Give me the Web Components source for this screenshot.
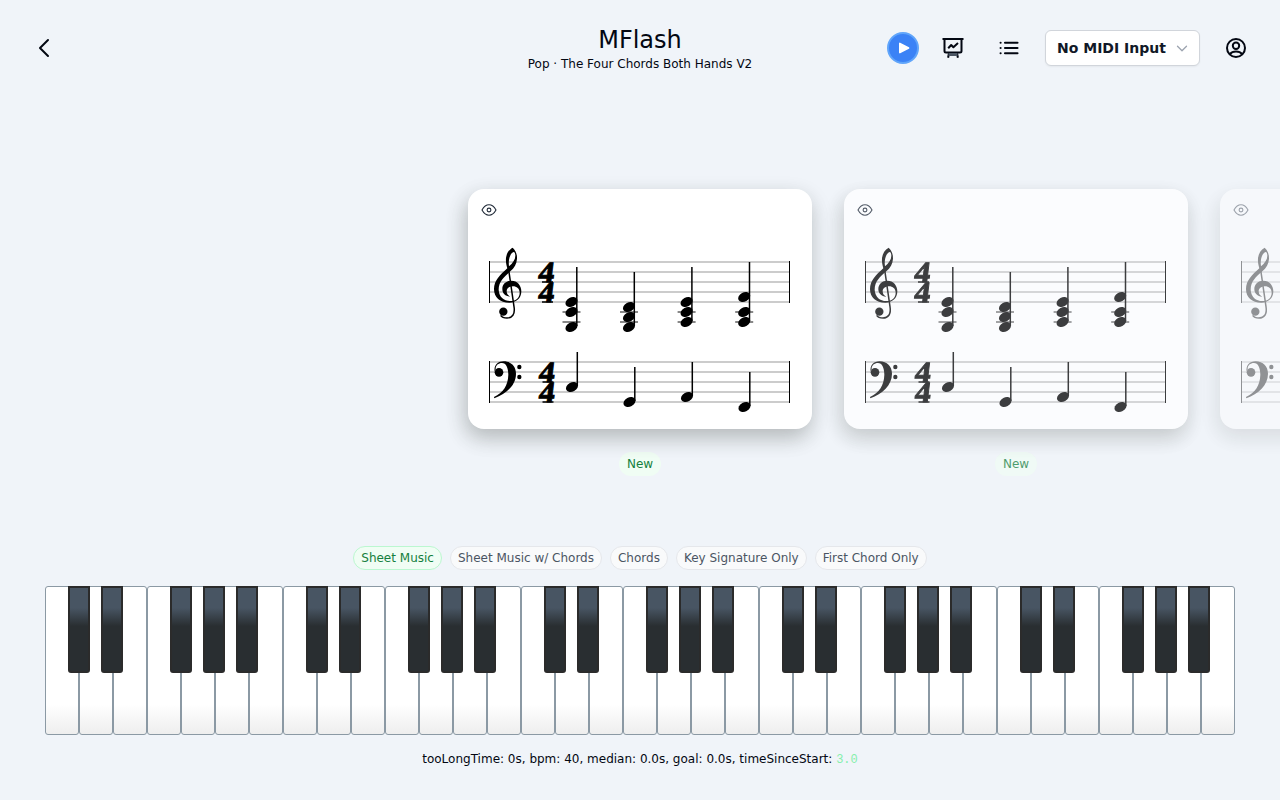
<!DOCTYPE html>
<html lang="en"><head><meta charset="utf-8"><title>MFlash</title>
<style>html,body{margin:0;height:100%}body{background:#f0f4f9;font-family:"DejaVu Sans",sans-serif;color:#030712;overflow:hidden}</style></head><body>
<m-app></m-app>
<script>
const define=(name,html,after)=>customElements.define(name,class extends HTMLElement{
  connectedCallback(){
    if(this.shadowRoot)return;
    const root=this.attachShadow({mode:'open'});
    const t=document.createElement('template');
    t.innerHTML=typeof html==='function'?html(this):html;
    root.append(t.content.cloneNode(true));
  }
});

define('m-header',`<style>
:host{display:grid;grid-template-columns:1fr auto 1fr;align-items:center;height:96px;padding:0 32px;box-sizing:border-box}
svg{display:block}
.title{text-align:center}
h1{font-size:24px;line-height:32px;font-weight:400;margin:0}
p{font-size:12px;line-height:16px;margin:0}
.right{display:flex;justify-content:flex-end;align-items:center}
.play{width:32px;height:32px;box-sizing:border-box;border:2px solid #60a5fa;border-radius:50%;background:#3b82f6;margin-right:22px}
.select{display:flex;align-items:center;justify-content:space-between;box-sizing:border-box;width:155px;height:36px;border:1px solid #d1d5db;border-radius:6px;background:#fff;padding:0 11px;font-size:14px;font-weight:600;color:#111827;box-shadow:0 1px 2px #0000000d;margin:0 24px 0 24px;white-space:nowrap}
</style>
<svg width="24" height="24" viewBox="0 0 24 24" fill="none" stroke="#030712" stroke-width="2" stroke-linecap="round" stroke-linejoin="round"><path d="M16 4 8 12 16 20"/></svg>
<div class="title"><h1>MFlash</h1><p>Pop · The Four Chords Both Hands V2</p></div>
<div class="right">
<div class="play"><svg width="28" height="28" viewBox="0 0 28 28"><path d="M10.800 9.400v9.200l8.800-4.600z" fill="#fff" stroke="#fff" stroke-width="1.6" stroke-linejoin="round"/></svg></div>
<svg width="24" height="24" viewBox="0 0 24 24" fill="none" stroke="#030712" stroke-width="2" stroke-linejoin="round"><path d="M1.500 3h21M3.500 3v12q0 1.500 1.500 1.500h14q1.500 0 1.500-1.500V3M8 17l-.900 4.800M16 17l.900 4.800"/><path d="M7.500 18.500h9" stroke="#4b5563" stroke-width="3"/><path d="M7.200 12.200l3-3.200 2.200 2.200 4.600-4.200"/></svg>
<svg style="margin-left:32px" width="24" height="24" viewBox="0 0 24 24" stroke="#030712" stroke-width="2.100" stroke-linecap="round"><path d="M8 6.800H20.500M8 12H20.500M8 17.200H20.500M3.600 6.800h.01M3.600 12h.01M3.600 17.200h.01"/></svg>
<div class="select"><span>No MIDI Input</span><svg width="12" height="12" viewBox="0 0 12 12" fill="none" stroke="#9ca3af" stroke-width="1.300" stroke-linecap="round" stroke-linejoin="round"><path d="M1.500 4.200 6 8.700l4.500-4.500"/></svg></div>
<svg width="24" height="24" viewBox="0 0 24 24" fill="none" stroke="#030712" stroke-width="2"><circle cx="12" cy="12" r="9"/><circle cx="12" cy="9.700" r="3.200"/><path d="M5.700 18.300Q8 15.500 12 15.500t6.300 2.800"/></svg>
</div>`);

// Score coordinates: the first staff line's left end is (21,73) in the card.
const head=(x,y)=>`<ellipse cx="${x}" cy="${y}" rx="6.400" ry="4.600" transform="rotate(-28 ${x} ${y})"/>`;
const staff=y=>{let s='';for(let i=0;i<5;i++)s+=`<path d="M21 ${y+i*10}H322" stroke="#ccc" stroke-width="2"/>`;
  return s+`<path d="M21.500 ${y-1}v42M321.500 ${y-1}v42" stroke="#000"/>`};
const stem=(x,top,ys)=>`<path d="M${x+5.300} ${top}V${Math.max(...ys)-1}" stroke="#000" stroke-width="1.500"/>`+ys.map(y=>head(x,y)).join('');
const chord=(x,top,ys)=>`<path d="M${x-9} 123h18M${x-9} 133h18" stroke="#888" stroke-width="2"/>`+stem(x,top,ys);
const four=(x,y)=>`<text transform="translate(${x} ${y}) skewX(-7) scale(1.080 1)" font-family="Liberation Serif" font-weight="700" font-size="29.500" text-anchor="middle" stroke="#000" stroke-width=".9">4</text><path d="M${x-3.500} ${y}h11" stroke="#000" stroke-width="1.500"/>`;
const treble=`<g transform="translate(12 51) scale(.33333)">
<path fill-rule="evenodd" d="M98 23C107 31 112 44 111 56C110 72 103 83 91 94C72 111 56 124 56 149C57 171 72 183 91 183C109 183 119 172 119 158C119 146 110 139 99 139C87 139 80 146 80 154C80 163 85 167 91 170C76 169 67 160 67 147C67 132 79 122 94 122C112 122 124 136 124 154C124 175 109 188 88 188C60 188 42 172 42 147C42 122 60 105 82 85C79 75 77 65 78 54C80 39 87 29 98 23ZM101 36C92 39 84 55 87 79C98 69 106 59 106 47C106 41 104 36 101 36Z"/>
<path d="M85 82 102 200C106 223 96 234 81 234C73 234 65 231 62 226" fill="none" stroke="#000" stroke-width="4.500"/>
<circle cx="70" cy="215" r="12.500"/></g>`;
const bass=`<g transform="translate(-8 151) scale(.33333)">
<path d="M102 171C129 158 144 137 145 104C145 83 138 69 126 69C115 69 107 76 107 86L104 95C101 76 113 64 131 64C153 64 168 79 168 101C168 136 139 161 103 175Z"/>
<circle cx="117" cy="97" r="13"/><circle cx="178" cy="81" r="6.500"/><circle cx="178" cy="111" r="6.500"/></g>`;

define('m-flashcard',`<style>
:host{display:flex;flex-direction:column;align-items:center;flex:none;width:344px}
.card{position:relative;width:344px;height:240px;border-radius:16px;background:#fff;box-shadow:-3px 9px 20px #28302833,0 8px 24px #0000001a}
svg{display:block}
.eye{position:absolute;left:13px;top:13px}
.badge{margin-top:23px;height:24px;line-height:24px;padding:0 8px;border-radius:12px;background:#f0fdf4;color:#15803d;font-size:12px}
</style>
<div class="card"><svg width="344" height="240">${staff(73)}${treble}${four(77.500,93)}${four(77.500,113)}
${chord(103.500,78,[113,123,138])}${chord(161,83,[118,128,138])}${chord(218.600,78,[113,123,133])}${chord(276.200,73,[108,123,133])}
${staff(173)}${bass}${four(78,193)}${four(78,213)}
${stem(104,163,[198])}${stem(161.500,178,[213])}${stem(219,173,[208])}${stem(276.500,183,[218])}</svg>
<svg class="eye" width="16" height="16" viewBox="0 0 16 16" fill="none" stroke="#1f2937" stroke-width="1.100"><path d="M1 8C3 4.400 5.200 2.800 8 2.800s5 1.600 7 5.200c-2 3.600-4.200 5.200-7 5.200S3 11.600 1 8Z"/><circle cx="8" cy="8" r="1.900"/></svg></div>
<div class="badge"><slot></slot></div>`);

define('m-chip',`<style>:host{display:block;box-sizing:border-box;height:24px;line-height:22px;border:1px solid #e5e7eb;border-radius:12px;padding:0 7px;font-size:12px;background:#f9fafb;color:#4b5563;white-space:nowrap}
:host([active]){border-color:#bbf7d0;background:#f0fdf4;color:#15803d}</style><slot></slot>`);

define('m-piano',()=>{
  const offs=[23,56,125,158,191];
  let w='',b='';
  for(let i=0;i<35;i++)w+='<div class="w"></div>';
  for(let o=0;o<5;o++)for(const x of offs)b+=`<i style="left:${o*238+x}px"></i>`;
  return `<style>:host{display:flex;position:relative;width:1190px;height:149px}
.w{box-sizing:border-box;width:34px;border:1px solid #8b99a4;border-radius:3px;background:linear-gradient(#fff 80%,#eee)}
i{position:absolute;top:0;width:22px;height:87px;box-sizing:border-box;border:2px solid #2b2b2b;border-radius:0 0 3px 3px;background:linear-gradient(#485563 0,#485563 24%,#292e31 46%)}
</style>${w}${b}`});

define('m-app',`<style>
:host{display:flex;flex-direction:column;height:800px;width:1280px;overflow:hidden}
.cards{display:flex;gap:32px;padding:93px 0 0 468px;height:449px;box-sizing:border-box}
.chips{display:flex;gap:8px;justify-content:center;margin-top:1px;height:24px}
m-piano{margin:16px auto 0}
.stats{font-size:12px;line-height:16px;text-align:center;margin-top:16px}
.stats span{font-family:"Liberation Mono",monospace;color:#86efac}
</style>
<m-header></m-header>
<div class="cards"><m-flashcard>New</m-flashcard><m-flashcard style="opacity:.75">New</m-flashcard><m-flashcard style="opacity:.4">New</m-flashcard></div>
<div class="chips"><m-chip active>Sheet Music</m-chip><m-chip>Sheet Music w/ Chords</m-chip><m-chip>Chords</m-chip><m-chip>Key Signature Only</m-chip><m-chip>First Chord Only</m-chip></div>
<m-piano></m-piano>
<div class="stats">tooLongTime: 0s, bpm: 40, median: 0.0s, goal: 0.0s, timeSinceStart: <span>3.0</span></div>`);
</script></body></html>
